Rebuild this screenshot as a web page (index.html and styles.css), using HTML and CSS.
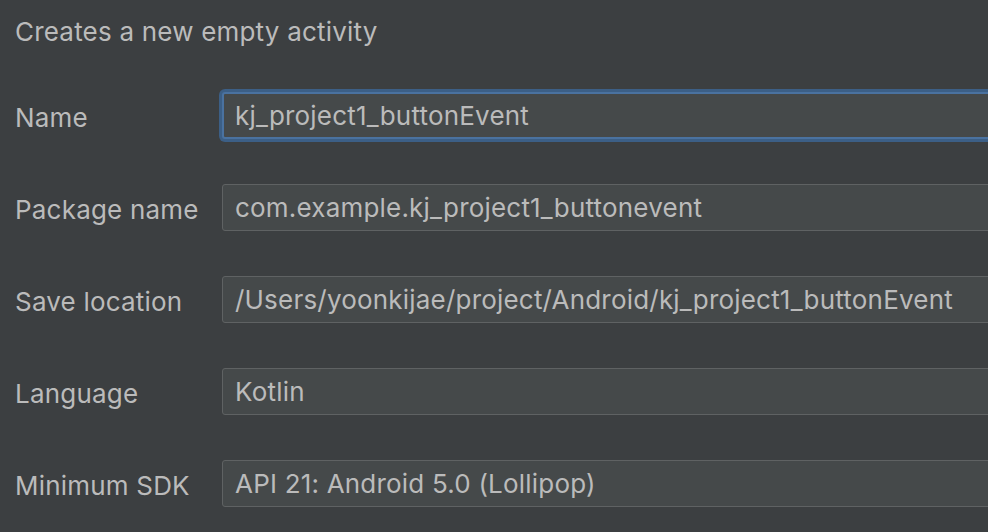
FILE: index.html
```html
<!DOCTYPE html>
<html>
<head>
<meta charset="utf-8">
<link rel="stylesheet" href="styles.css">
</head>
<body>
<div class="panel">
  <div class="desc">Creates a new empty activity</div>
  <div class="form">
    <div class="label">Name</div>
    <div class="field focused">kj_project1_buttonEvent</div>
    <div class="label">Package name</div>
    <div class="field">com.example.kj_project1_buttonevent</div>
    <div class="label">Save location</div>
    <div class="field">/Users/yoonkijae/project/Android/kj_project1_buttonEvent</div>
    <div class="label">Language</div>
    <div class="field">Kotlin</div>
    <div class="label">Minimum SDK</div>
    <div class="field">API 21: Android 5.0 (Lollipop)</div>
  </div>
</div>
</body>
</html>
```
FILE: styles.css
```css
html, body {
  margin: 0;
  padding: 0;
  background: #3c3f41;
  overflow: hidden;
  height: 100%;
}
.panel {
  font-family: Inter, "Noto Sans", sans-serif;
  font-size: 26px;
  letter-spacing: 0.2px;
  color: #bbbbbb;
  padding: 14px 0 0 15px;
  width: 1100px;
}
.desc {
  line-height: 36px;
  height: 36px;
}
.form {
  display: grid;
  grid-template-columns: 207px 1fr;
  row-gap: 45px;
  margin-top: 42px;
  align-items: center;
}
.label {
  line-height: 30px;
  padding-top: 4px;
}
.field {
  box-sizing: border-box;
  height: 47px;
  line-height: 46px;
  border: 1px solid #5f6263;
  border-radius: 3px;
  background: #45494a;
  padding-left: 12px;
  white-space: nowrap;
}
.field.focused {
  border: 2px solid #4a72a0;
  line-height: 44px;
  padding-left: 11px;
  box-shadow: 0 0 0 3px #3c5f86;
}
```
